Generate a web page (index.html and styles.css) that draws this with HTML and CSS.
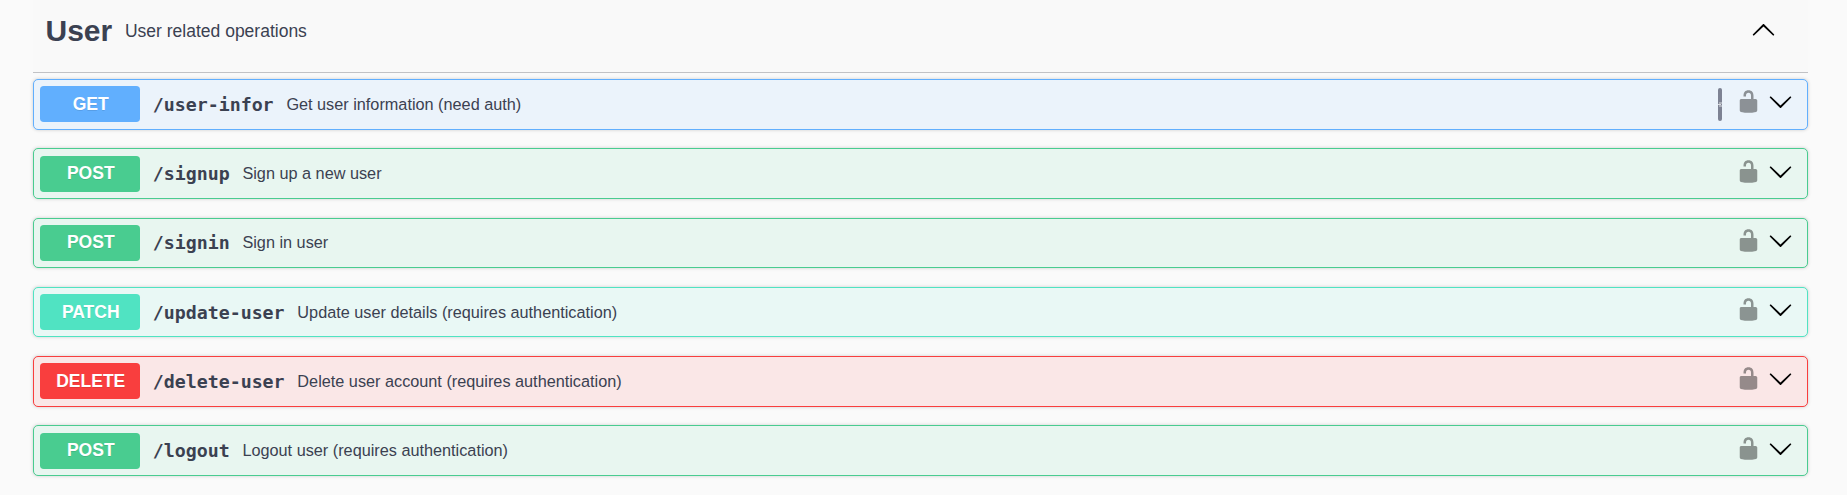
FILE: index.html
```
<!DOCTYPE html>
<html lang="en">
<head>
<meta charset="utf-8">
<title>User</title>
<link rel="stylesheet" href="styles.css">
</head>
<body>
<svg class="defs" aria-hidden="true">
  <symbol id="unlocked" viewBox="0 0 20 20"><path d="M15.8 8H14V5.6C14 2.703 12.665 1 10 1 7.334 1 6 2.703 6 5.6V6h2v-.801C8 3.754 8.797 3 10 3c1.203 0 2 .754 2 2.199V8H4c-.553 0-1 .646-1 1.199V17c0 .549.428 1.139.951 1.307l1.197.387C5.672 18.861 6.55 19 7.1 19h5.8c.549 0 1.428-.139 1.951-.307l1.196-.387c.524-.167.953-.757.953-1.306V9.199C17 8.646 16.352 8 15.8 8z"/></symbol>
  <symbol id="arrow-down" viewBox="0 0 20 20"><path d="M17.418 6.109c.272-.268.709-.268.979 0s.271.701 0 .969l-7.908 7.83c-.27.268-.707.268-.979 0l-7.908-7.83c-.27-.268-.27-.701 0-.969.271-.268.709-.268.979 0L10 13.25l7.418-7.141z"/></symbol>
</svg>
<main class="section">
  <header class="tag">
    <h3 class="tag-name">User</h3>
    <p class="tag-desc">User related operations</p>
    <svg class="icon up"><use href="#arrow-down"/></svg>
  </header>
  <div class="list">
    <div class="op get">
      <span class="method">GET</span><span class="path">/user-infor</span><span class="desc">Get user information (need auth)</span>
      <span class="copy"><svg class="copy-icon" viewBox="0 0 4 5"><path d="M1 1h3M0 2.5h3M1 4h3"/></svg></span>
      <svg class="icon lock"><use href="#unlocked"/></svg><svg class="icon"><use href="#arrow-down"/></svg>
    </div>
    <div class="op post low tight">
      <span class="method">POST</span><span class="path">/signup</span><span class="desc">Sign up a new user</span>
      <svg class="icon lock"><use href="#unlocked"/></svg><svg class="icon"><use href="#arrow-down"/></svg>
    </div>
    <div class="op post short tight">
      <span class="method">POST</span><span class="path">/signin</span><span class="desc">Sign in user</span>
      <svg class="icon lock"><use href="#unlocked"/></svg><svg class="icon"><use href="#arrow-down"/></svg>
    </div>
    <div class="op patch short">
      <span class="method">PATCH</span><span class="path">/update-user</span><span class="desc">Update user details (requires authentication)</span>
      <svg class="icon lock"><use href="#unlocked"/></svg><svg class="icon"><use href="#arrow-down"/></svg>
    </div>
    <div class="op delete">
      <span class="method">DELETE</span><span class="path">/delete-user</span><span class="desc">Delete user account (requires authentication)</span>
      <svg class="icon lock"><use href="#unlocked"/></svg><svg class="icon"><use href="#arrow-down"/></svg>
    </div>
    <div class="op post low tight">
      <span class="method">POST</span><span class="path">/logout</span><span class="desc">Logout user (requires authentication)</span>
      <svg class="icon lock"><use href="#unlocked"/></svg><svg class="icon"><use href="#arrow-down"/></svg>
    </div>
  </div>
</main>
</body>
</html>
```
FILE: styles.css
```
* { box-sizing: border-box; }
body {
  margin: 0;
  height: 495px;
  overflow: hidden;
  background: #fafafa;
  color: #3b4151;
  font-family: "Liberation Sans", Arial, sans-serif;
}
.defs { display: none; }
.section { margin: 0 39px 0 33px; }
.tag {
  display: flex;
  align-items: center;
  height: 73px;
  padding: 0 32px 12px 12.5px;
  background: #f9f9f9;
  border-bottom: 1px solid #c1c2c5;
}
.tag-name { margin: 1px 0 0; font-size: 30px; line-height: 36px; }
.tag-desc { flex: 1; margin: 2px 0 0; padding-left: 12.75px; font-size: 17.5px; }
.icon { flex: none; width: 25px; height: 25px; fill: #000; }
.up { transform: rotate(180deg); }
.list { padding-top: 6px; }
.op {
  --line: 36px;
  display: flex;
  align-items: flex-start;
  height: 51px;
  margin-bottom: 18px;
  padding: 6px 13.75px 0 6px;
  border: 1px solid;
  border-radius: 5px;
  box-shadow: 0 0 3.75px rgba(0, 0, 0, .19);
}
/* rows sit on a 69.25px rhythm, rounded to whole pixels */
.low { margin-bottom: 19px; padding-top: 7px; }
.short { height: 50px; margin-bottom: 19px; }
.tight { --line: 34px; }
.method {
  width: 100px;
  height: 36px;
  padding-left: 1.5px;
  border-radius: 3.75px;
  color: #fff;
  font-size: 17.5px;
  font-weight: 700;
  line-height: var(--line);
  text-align: center;
  text-shadow: 0 1px 0 rgba(0, 0, 0, .1);
}
.path {
  padding-left: 12.75px;
  font: 700 18.25px "DejaVu Sans Mono", monospace;
  line-height: calc(var(--line) + 1px);
}
.desc { flex: 1; padding-left: 12.75px; font-size: 16.25px; line-height: var(--line); }
.op .icon { margin-top: 2.85px; }
.op .lock { margin-right: 7px; opacity: .4; }
.copy {
  display: flex;
  align-items: center;
  width: 4px;
  height: 33px;
  margin: 2px 14px 0 0;
  border-radius: 2px;
  background: #7d8293;
}
.copy-icon { width: 4px; height: 5px; fill: none; stroke: #e4e6ea; stroke-width: .9; }
.get { border-color: #61affe; background: #ebf3fb; }
.get .method { background: #61affe; }
.post { border-color: #49cc90; background: #e8f6f0; }
.post .method { background: #49cc90; }
.patch { border-color: #50e3c2; background: #e9f8f5; }
.patch .method { background: #50e3c2; }
.delete { border-color: #f93e3e; background: #fae7e7; }
.delete .method { background: #f93e3e; }
```
